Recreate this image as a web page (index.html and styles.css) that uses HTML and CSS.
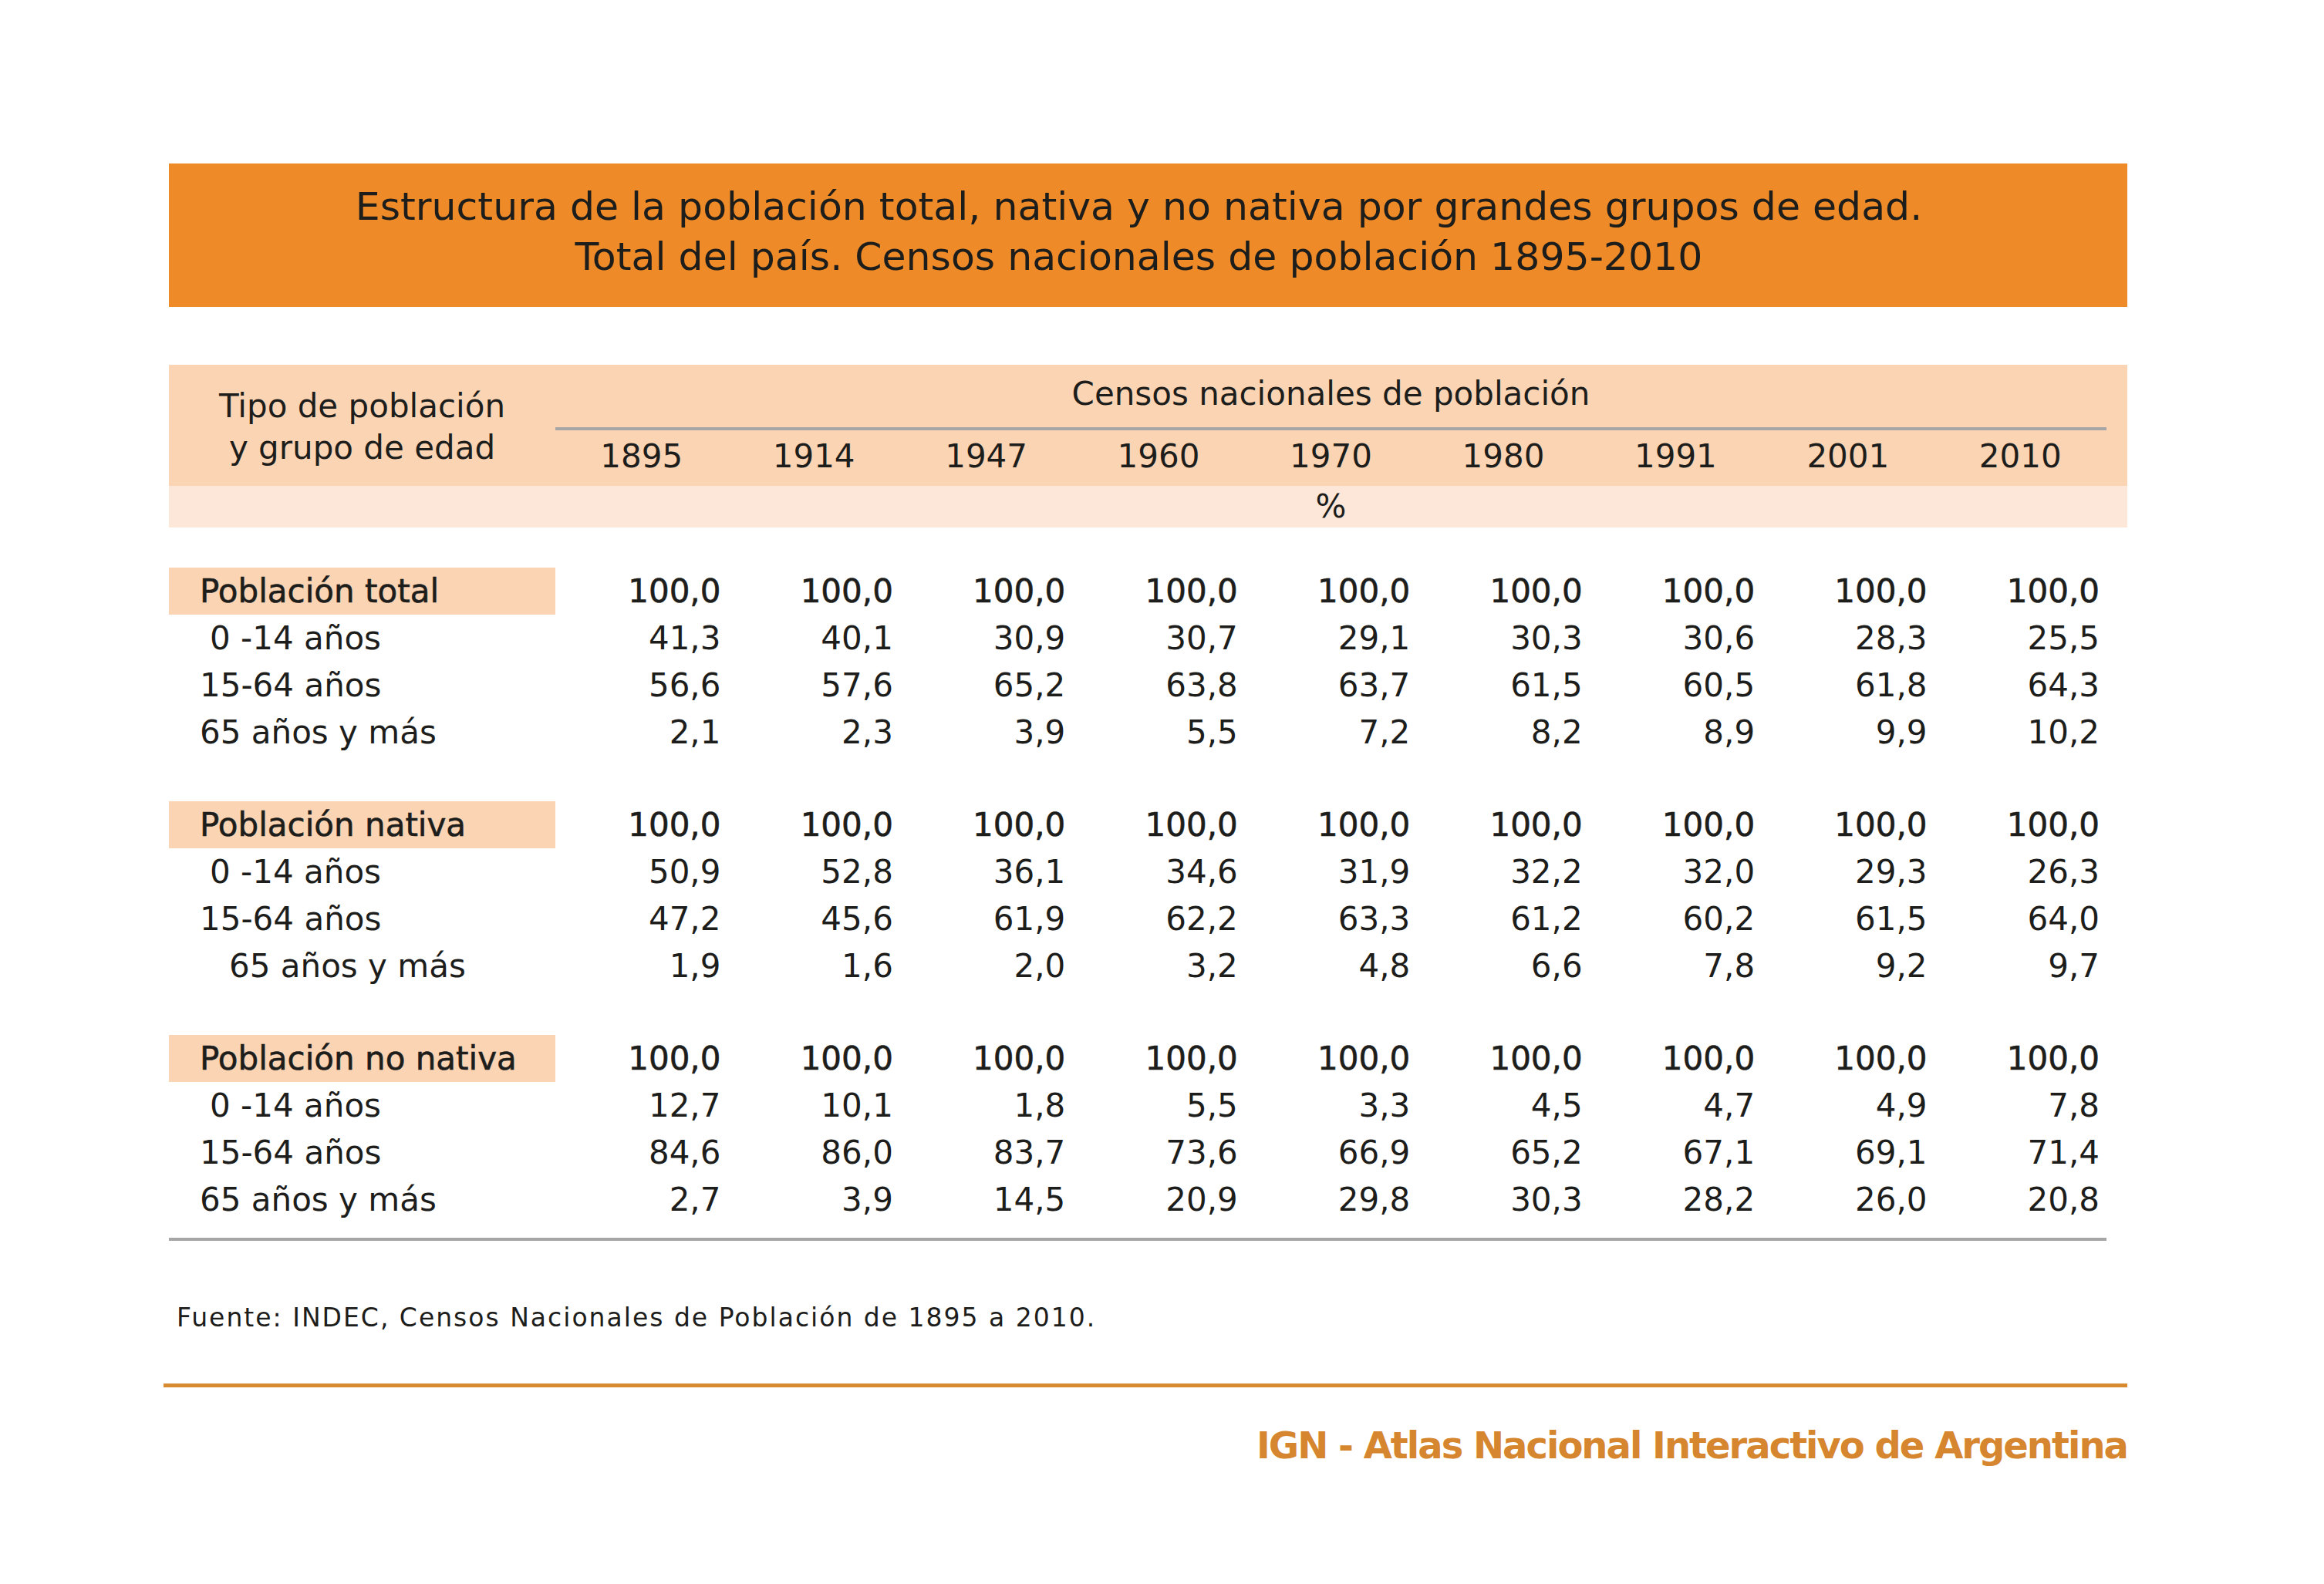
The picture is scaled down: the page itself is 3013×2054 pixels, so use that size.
FILE: index.html
```html
<!DOCTYPE html>
<html lang="es">
<head>
<meta charset="utf-8">
<title>Estructura de la población total, nativa y no nativa</title>
<link rel="stylesheet" href="styles.css">
</head>
<body>
<div class="page">
  <div class="title-box">
    <h1 class="title">Estructura de la población total, nativa y no nativa por grandes grupos de edad.<br>Total del país. Censos nacionales de población 1895-2010</h1>
  </div>

  <div class="thead">
    <div class="th-type">Tipo de población<br>y grupo de edad</div>
    <div class="th-censos">Censos nacionales de población</div>
    <div class="th-year">1895</div>
    <div class="th-year">1914</div>
    <div class="th-year">1947</div>
    <div class="th-year">1960</div>
    <div class="th-year">1970</div>
    <div class="th-year">1980</div>
    <div class="th-year">1991</div>
    <div class="th-year">2001</div>
    <div class="th-year">2010</div>
  </div>
  <div class="unit-band"><div class="unit">%</div></div>

  <div class="groups">
    <div class="group">
      <div class="row row-head"><div class="label">Población total</div><div class="val">100,0</div><div class="val">100,0</div><div class="val">100,0</div><div class="val">100,0</div><div class="val">100,0</div><div class="val">100,0</div><div class="val">100,0</div><div class="val">100,0</div><div class="val">100,0</div></div>
      <div class="row"><div class="label ind-zero">0 -14 años</div><div class="val">41,3</div><div class="val">40,1</div><div class="val">30,9</div><div class="val">30,7</div><div class="val">29,1</div><div class="val">30,3</div><div class="val">30,6</div><div class="val">28,3</div><div class="val">25,5</div></div>
      <div class="row"><div class="label">15-64 años</div><div class="val">56,6</div><div class="val">57,6</div><div class="val">65,2</div><div class="val">63,8</div><div class="val">63,7</div><div class="val">61,5</div><div class="val">60,5</div><div class="val">61,8</div><div class="val">64,3</div></div>
      <div class="row"><div class="label">65 años y más</div><div class="val">2,1</div><div class="val">2,3</div><div class="val">3,9</div><div class="val">5,5</div><div class="val">7,2</div><div class="val">8,2</div><div class="val">8,9</div><div class="val">9,9</div><div class="val">10,2</div></div>
    </div>

    <div class="group">
      <div class="row row-head"><div class="label">Población nativa</div><div class="val">100,0</div><div class="val">100,0</div><div class="val">100,0</div><div class="val">100,0</div><div class="val">100,0</div><div class="val">100,0</div><div class="val">100,0</div><div class="val">100,0</div><div class="val">100,0</div></div>
      <div class="row"><div class="label ind-zero">0 -14 años</div><div class="val">50,9</div><div class="val">52,8</div><div class="val">36,1</div><div class="val">34,6</div><div class="val">31,9</div><div class="val">32,2</div><div class="val">32,0</div><div class="val">29,3</div><div class="val">26,3</div></div>
      <div class="row"><div class="label">15-64 años</div><div class="val">47,2</div><div class="val">45,6</div><div class="val">61,9</div><div class="val">62,2</div><div class="val">63,3</div><div class="val">61,2</div><div class="val">60,2</div><div class="val">61,5</div><div class="val">64,0</div></div>
      <div class="row"><div class="label ind-deep">65 años y más</div><div class="val">1,9</div><div class="val">1,6</div><div class="val">2,0</div><div class="val">3,2</div><div class="val">4,8</div><div class="val">6,6</div><div class="val">7,8</div><div class="val">9,2</div><div class="val">9,7</div></div>
    </div>

    <div class="group">
      <div class="row row-head"><div class="label">Población no nativa</div><div class="val">100,0</div><div class="val">100,0</div><div class="val">100,0</div><div class="val">100,0</div><div class="val">100,0</div><div class="val">100,0</div><div class="val">100,0</div><div class="val">100,0</div><div class="val">100,0</div></div>
      <div class="row"><div class="label ind-zero">0 -14 años</div><div class="val">12,7</div><div class="val">10,1</div><div class="val">1,8</div><div class="val">5,5</div><div class="val">3,3</div><div class="val">4,5</div><div class="val">4,7</div><div class="val">4,9</div><div class="val">7,8</div></div>
      <div class="row"><div class="label">15-64 años</div><div class="val">84,6</div><div class="val">86,0</div><div class="val">83,7</div><div class="val">73,6</div><div class="val">66,9</div><div class="val">65,2</div><div class="val">67,1</div><div class="val">69,1</div><div class="val">71,4</div></div>
      <div class="row"><div class="label">65 años y más</div><div class="val">2,7</div><div class="val">3,9</div><div class="val">14,5</div><div class="val">20,9</div><div class="val">29,8</div><div class="val">30,3</div><div class="val">28,2</div><div class="val">26,0</div><div class="val">20,8</div></div>
    </div>
  </div>

  <div class="rule-gray"></div>
  <p class="source">Fuente: INDEC, Censos Nacionales de Población de 1895 a 2010.</p>
  <div class="rule-orange"></div>
  <p class="brand">IGN - Atlas Nacional Interactivo de Argentina</p>
</div>
</body>
</html>
```

FILE: styles.css
```css
* { box-sizing: border-box; }

html, body {
  margin: 0;
  padding: 0;
  background: #ffffff;
}

body {
  font-family: "DejaVu Sans", "Liberation Sans", sans-serif;
  color: #1d1d1b;
}

.page {
  width: 2539px;
  margin-left: 219px;
  padding-top: 212px;
}

/* Title */
.title-box {
  height: 186px;
  background: #ee8a28;
  padding: 23px 24px 0 0;
  margin-bottom: 75px;
}

.title {
  margin: 0;
  font-size: 50.5px;
  font-weight: normal;
  line-height: 65px;
  text-align: center;
  color: #1d1d1b;
}

/* Table header */
.thead {
  display: grid;
  grid-template-columns: 501px repeat(9, 1fr);
  width: 2539px;
  padding-right: 27px;
  background: #fbd4b4;
  font-size: 42px;
}

.th-type {
  grid-column: 1;
  grid-row: 1 / 3;
  text-align: center;
  padding-top: 27px;
  line-height: 54px;
}

.th-censos {
  grid-column: 2 / -1;
  grid-row: 1;
  text-align: center;
  padding: 14px 0 19px;
  line-height: 48px;
  border-bottom: 4px solid #a6a6a6;
}

.th-year {
  grid-row: 2;
  text-align: center;
  padding: 10px 0 14px;
  line-height: 48px;
}

.unit-band {
  display: grid;
  grid-template-columns: 501px 1fr;
  width: 2539px;
  height: 54px;
  padding-right: 27px;
  background: #fce7d8;
  font-size: 42px;
}

.unit {
  grid-column: 2;
  text-align: center;
  line-height: 54px;
}

/* Body rows */
.groups {
  margin-top: 52px;
  display: flex;
  flex-direction: column;
  gap: 59px;
}

.row {
  display: grid;
  grid-template-columns: 501px repeat(9, 1fr);
  width: 2512px;
  height: 61px;
  line-height: 61px;
  font-size: 42px;
}

.label {
  padding-left: 40px;
  white-space: nowrap;
}

.label.ind-zero { padding-left: 53px; }
.label.ind-deep { padding-left: 78px; }

.val {
  text-align: right;
  padding-right: 9px;
  white-space: nowrap;
}

.row-head .label {
  background: #fbd4b4;
}

.row-head .label,
.row-head .val {
  -webkit-text-stroke: 0.6px #1d1d1b;
}

/* Footer */
.rule-gray {
  width: 2512px;
  height: 4px;
  margin-top: 19px;
  background: #a6a6a6;
}

.source {
  margin: 80px 0 0;
  padding-left: 10px;
  font-size: 33px;
  letter-spacing: 2px;
  line-height: 40px;
}

.rule-orange {
  width: 2546px;
  height: 5px;
  margin: 65px 0 0 -7px;
  background: #d88a30;
}

.brand {
  margin: 47px 0 0;
  text-align: right;
  font-size: 48px;
  font-weight: bold;
  letter-spacing: -2px;
  line-height: 56px;
  color: #d5862f;
}
```
